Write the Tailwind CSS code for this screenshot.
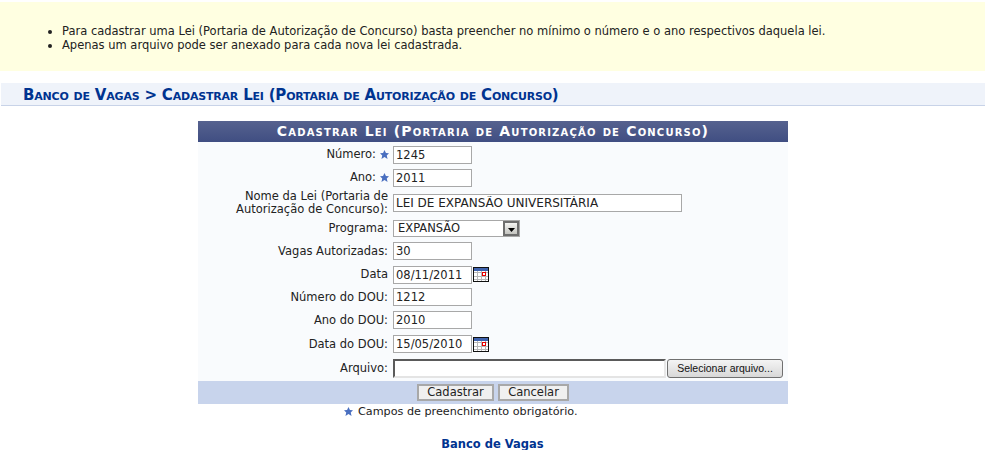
<!DOCTYPE html>
<html lang="pt-BR">
<head>
<meta charset="UTF-8">
<title>Cadastrar Lei</title>
<script src="https://cdn.jsdelivr.net/npm/@tailwindcss/browser@4"></script>
</head>
<body class="bg-white font-['DejaVu_Sans',sans-serif] text-[11.5px] leading-[13px] text-[#222] w-[985px] h-[450px] overflow-hidden">
  <!-- instrucoes -->
  <div class="mt-[2px] h-[69px] bg-[#ffffe1] pt-[22px] pl-[62px]">
    <ul class="list-disc leading-[14px]">
      <li>Para cadastrar uma Lei (Portaria de Autorização de Concurso) basta preencher no mínimo o número e o ano respectivos daquela lei.</li>
      <li>Apenas um arquivo pode ser anexado para cada nova lei cadastrada.</li>
    </ul>
  </div>

  <h2 class="mt-[12px] ml-[1px] h-[23px] bg-[#eff3fa] border-b border-[#c8d3e8] pl-[22px] pt-[4px] text-[15px] tracking-[-0.2px] leading-[17px] font-bold text-[#003390] [font-variant:small-caps]">Banco de Vagas &gt; Cadastrar Lei (Portaria de Autorização de Concurso)</h2>

  <!-- formulario -->
  <div class="ml-[198px] mt-[15px] w-[590px] bg-[#f9fbfd]">
    <div class="h-[21px] bg-gradient-to-b from-[#56628f] to-[#404e82] text-center text-white font-bold text-[14px] leading-[21px] tracking-[1.18px] [font-variant:small-caps]">Cadastrar Lei (Portaria de Autorização de Concurso)</div>
    <div class="grid grid-cols-[195px_1fr] items-center pt-[1px]">
      <div class="h-[23px] flex items-center justify-end pr-[4px] gap-[4px]">Número: <svg class="w-[9px] h-[9px]" viewBox="0 0 10 10"><polygon points="5,0 6.6,3.3 10,3.6 7.5,6 8.4,10 5,7.9 1.6,10 2.5,6 0,3.6 3.4,3.3" fill="#4a6fc0"/></svg></div>
      <div class="h-[23px] flex items-center"><input value="1245" class="w-[79px] h-[18px] border border-[#a8a8a8] px-[2px] bg-white text-[11.5px] outline-none"></div>

      <div class="h-[23px] flex items-center justify-end pr-[4px] gap-[4px]">Ano: <svg class="w-[9px] h-[9px]" viewBox="0 0 10 10"><polygon points="5,0 6.6,3.3 10,3.6 7.5,6 8.4,10 5,7.9 1.6,10 2.5,6 0,3.6 3.4,3.3" fill="#4a6fc0"/></svg></div>
      <div class="h-[23px] flex items-center"><input value="2011" class="w-[79px] h-[18px] border border-[#a8a8a8] px-[2px] bg-white text-[11.5px] outline-none"></div>

      <div class="h-[28px] flex items-center justify-end text-right pr-[5px]">Nome da Lei (Portaria de<br>Autorização de Concurso):</div>
      <div class="h-[28px] flex items-center"><input value="LEI DE EXPANSÃO UNIVERSITÁRIA" class="w-[289px] h-[18px] border border-[#a8a8a8] px-[2px] bg-white text-[12px] outline-none"></div>

      <div class="h-[22px] flex items-center justify-end pr-[5px]">Programa:</div>
      <div class="h-[22px] flex items-center">
        <div class="w-[127px] h-[17px] border border-[#a8a8a8] bg-white flex items-center justify-between pl-[4px]">
          <span>EXPANSÃO</span>
          <span class="w-[16px] h-[15px] bg-gradient-to-b from-[#f4f4f2] to-[#c4c4c0] border-2 border-[#6e6e6e] flex items-end justify-center pb-[2px]">
            <svg class="w-[7px] h-[4px]" viewBox="0 0 7 4"><polygon points="0,0 7,0 3.5,4" fill="#000"/></svg>
          </span>
        </div>
      </div>

      <div class="h-[24px] flex items-center justify-end pr-[5px]">Vagas Autorizadas:</div>
      <div class="h-[24px] flex items-center"><input value="30" class="w-[79px] h-[18px] border border-[#a8a8a8] px-[2px] bg-white text-[11.5px] outline-none"></div>

      <div class="h-[23px] flex items-center justify-end pr-[5px]">Data</div>
      <div class="h-[23px] flex items-center gap-[1px]">
        <input value="08/11/2011" class="w-[79px] h-[18px] border border-[#a8a8a8] px-[2px] bg-white text-[11.5px] outline-none">
        <svg class="w-[16px] h-[15px]" viewBox="0 0 16 15"><rect width="16" height="15" fill="#fff"/><path d="M4.5 3v11M8.5 3v11M12.5 3v11M1 5.5h14M1 9.5h14M1 12.5h14" stroke="#b8b8b8"/><rect x="1" y="1" width="14" height="3" fill="#3f63ae"/><rect x="0.5" y="0.5" width="15" height="14" fill="none" stroke="#101010"/><rect x="9.5" y="5.5" width="3" height="3" fill="#fff" stroke="#e80000"/></svg>
      </div>

      <div class="h-[22px] flex items-center justify-end pr-[5px]">Número do DOU:</div>
      <div class="h-[22px] flex items-center"><input value="1212" class="w-[79px] h-[18px] border border-[#a8a8a8] px-[2px] bg-white text-[11.5px] outline-none"></div>

      <div class="h-[24px] flex items-center justify-end pr-[5px]">Ano do DOU:</div>
      <div class="h-[24px] flex items-center"><input value="2010" class="w-[79px] h-[18px] border border-[#a8a8a8] px-[2px] bg-white text-[11.5px] outline-none"></div>

      <div class="h-[24px] flex items-center justify-end pr-[5px]">Data do DOU:</div>
      <div class="h-[24px] flex items-center gap-[1px]">
        <input value="15/05/2010" class="w-[79px] h-[18px] border border-[#a8a8a8] px-[2px] bg-white text-[11.5px] outline-none">
        <svg class="w-[16px] h-[15px]" viewBox="0 0 16 15"><rect width="16" height="15" fill="#fff"/><path d="M4.5 3v11M8.5 3v11M12.5 3v11M1 5.5h14M1 9.5h14M1 12.5h14" stroke="#b8b8b8"/><rect x="1" y="1" width="14" height="3" fill="#3f63ae"/><rect x="0.5" y="0.5" width="15" height="14" fill="none" stroke="#101010"/><rect x="9.5" y="5.5" width="3" height="3" fill="#fff" stroke="#e80000"/></svg>
      </div>

      <div class="h-[24px] flex items-center justify-end pr-[5px]">Arquivo:</div>
      <div class="h-[24px] flex items-center gap-[1px]">
        <div class="w-[273px] h-[19px] bg-white border-2 border-[#5a5a5a] border-r-[#e8e8e8] border-b-[#e4e4e4]"></div>
        <button class="w-[116px] h-[19px] rounded-[3px] border border-[#707070] bg-gradient-to-b from-[#f4f4f4] to-[#d8d8d8] font-['Liberation_Sans',sans-serif] text-[10.5px] leading-[15px] text-[#111]">Selecionar arquivo...</button>
      </div>
    </div>
    <div class="mt-[1px] h-[23px] bg-[#c8d4ec] flex items-center justify-center gap-[4px]">
      <button class="w-[77px] h-[17px] border-2 border-[#a8a8a8] bg-[#f0f0f0] leading-[13px]">Cadastrar</button>
      <button class="w-[71px] h-[17px] border-2 border-[#a8a8a8] bg-[#f0f0f0] leading-[13px]">Cancelar</button>
    </div>
  </div>

  <p class="mt-[1px] ml-[344px] h-[13px] flex items-center gap-[5px] text-[11.2px]"><svg class="w-[9px] h-[9px]" viewBox="0 0 10 10"><polygon points="5,0 6.6,3.3 10,3.6 7.5,6 8.4,10 5,7.9 1.6,10 2.5,6 0,3.6 3.4,3.3" fill="#4a6fc0"/></svg>Campos de preenchimento obrigatório.</p>
  <p class="mt-[20px] text-center font-bold text-[#003390]">Banco de Vagas</p>
</body>
</html>
